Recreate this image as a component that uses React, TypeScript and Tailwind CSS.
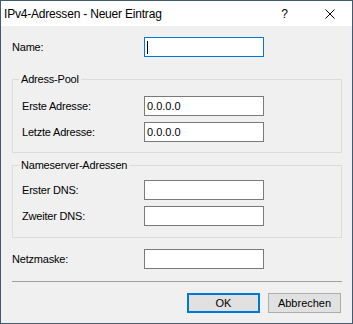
import React from 'react';

// Dialog row: label + text field
const Field: React.FC<{
  label: string;
  value?: string;
  labelWidth: string;
  focused?: boolean;
}> = ({ label, value, labelWidth, focused }) => (
  <div className="flex items-center h-[20px]">
    <span className={`${labelWidth} shrink-0 leading-[13px] tracking-[-0.2px]`}>{label}</span>
    <div
      className={`w-[120px] h-[20px] bg-white border flex items-center pl-[2px] ${
        focused ? 'border-[#0078d7]' : 'border-[#7a7a7a]'
      }`}
    >
      {focused && <span className="w-px h-[13px] bg-black" />}
      {value && <span className="leading-[13px]">{value}</span>}
    </div>
  </div>
);

const Group: React.FC<{
  title: string;
  className?: string;
  bodyClass?: string;
  children: React.ReactNode;
}> = ({ title, className, bodyClass, children }) => (
  <fieldset className={`border border-[#dcdcdc] px-[6px] ${className ?? ''}`}>
    <legend className="px-[2px] leading-[13px] tracking-[-0.2px]">{title}</legend>
    <div className={`flex flex-col gap-[6px] pl-[3px] ${bodyClass ?? ''}`}>{children}</div>
  </fieldset>
);

export default function App() {
  return (
    <div className="w-[353px] h-[324px] border border-[#3f5a74] bg-[#f0f0f0] flex flex-col font-['Liberation_Sans',Arial,sans-serif] text-[11px] text-black overflow-hidden">
      {/* Title bar */}
      <div className="h-[25px] shrink-0 bg-white flex items-center">
        <span className="pl-[3px] text-[12px] tracking-[-0.2px] leading-[14px]">
          IPv4-Adressen - Neuer Eintrag
        </span>
        <div className="ml-auto flex h-full">
          <div className="w-[45px] flex items-center justify-center text-[12px]">?</div>
          <div className="w-[45px] flex items-center justify-center">
            <svg width="10" height="10" viewBox="0 0 10 10">
              <path d="M0.5 0.5 L9.5 9.5 M9.5 0.5 L0.5 9.5" stroke="#000" strokeWidth="1" fill="none" />
            </svg>
          </div>
        </div>
      </div>

      {/* Body */}
      <div className="flex-1 flex flex-col pl-[11px] pr-[10px] pt-[11px]">
        <Field label="Name:" labelWidth="w-[132px]" focused />

        <Group title="Adress-Pool" className="mt-[16px] pb-[10px]" bodyClass="pt-[10px]">
          <Field label="Erste Adresse:" labelWidth="w-[122px]" value="0.0.0.0" />
          <Field label="Letzte Adresse:" labelWidth="w-[122px]" value="0.0.0.0" />
        </Group>

        <Group title="Nameserver-Adressen" className="mt-[6px] pb-[11px]" bodyClass="pt-[8px]">
          <Field label="Erster DNS:" labelWidth="w-[122px]" />
          <Field label="Zweiter DNS:" labelWidth="w-[122px]" />
        </Group>

        <div className="mt-[11px]">
          <Field label="Netzmaske:" labelWidth="w-[132px]" />
        </div>

        <div className="mt-[12px] h-px bg-[#a0a0a0]" />

        <div className="mt-[11px] flex justify-end gap-[8px] pr-[1px]">
          <button className="w-[73px] h-[20px] bg-[#e1e1e1] border-2 border-[#0078d7] leading-[13px]">
            OK
          </button>
          <button className="w-[73px] h-[20px] bg-[#e1e1e1] border border-[#adadad] leading-[13px]">
            Abbrechen
          </button>
        </div>
      </div>
    </div>
  );
}
